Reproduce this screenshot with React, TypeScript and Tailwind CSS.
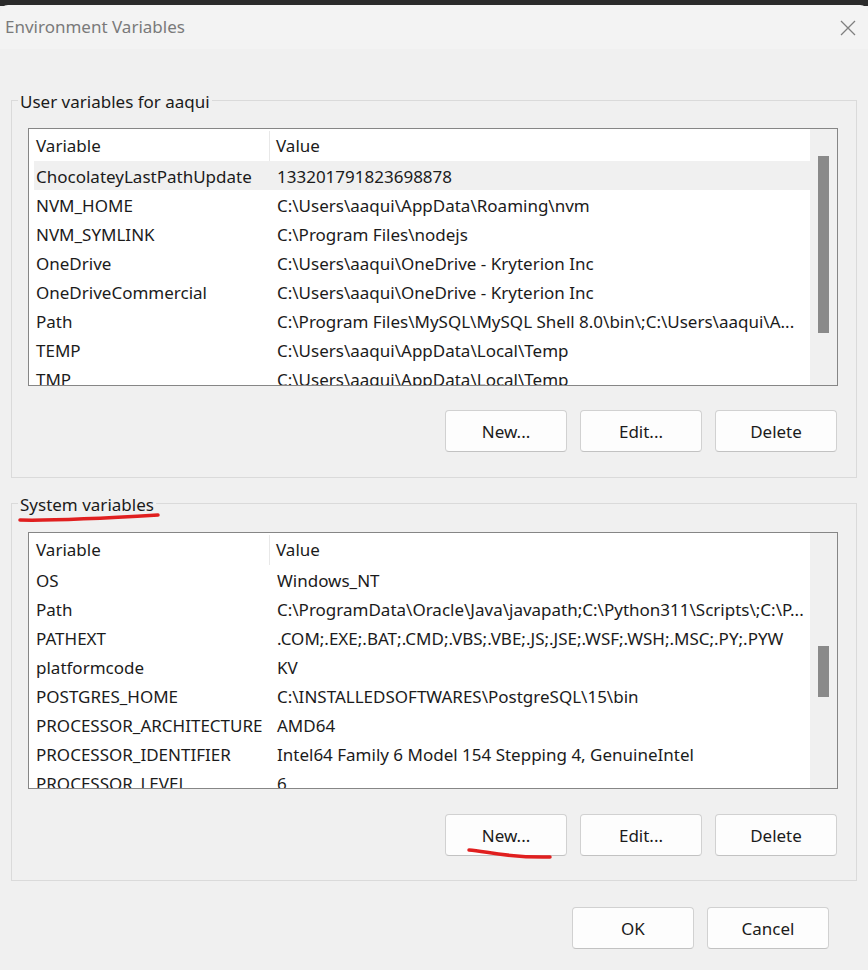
import React from 'react'

const userVars: Array<[string, string]> = [
  ['ChocolateyLastPathUpdate', '133201791823698878'],
  ['NVM_HOME', 'C:\\Users\\aaqui\\AppData\\Roaming\\nvm'],
  ['NVM_SYMLINK', 'C:\\Program Files\\nodejs'],
  ['OneDrive', 'C:\\Users\\aaqui\\OneDrive - Kryterion Inc'],
  ['OneDriveCommercial', 'C:\\Users\\aaqui\\OneDrive - Kryterion Inc'],
  ['Path', 'C:\\Program Files\\MySQL\\MySQL Shell 8.0\\bin\\;C:\\Users\\aaqui\\A...'],
  ['TEMP', 'C:\\Users\\aaqui\\AppData\\Local\\Temp'],
  ['TMP', 'C:\\Users\\aaqui\\AppData\\Local\\Temp'],
]

const systemVars: Array<[string, string]> = [
  ['OS', 'Windows_NT'],
  ['Path', 'C:\\ProgramData\\Oracle\\Java\\javapath;C:\\Python311\\Scripts\\;C:\\P...'],
  ['PATHEXT', '.COM;.EXE;.BAT;.CMD;.VBS;.VBE;.JS;.JSE;.WSF;.WSH;.MSC;.PY;.PYW'],
  ['platformcode', 'KV'],
  ['POSTGRES_HOME', 'C:\\INSTALLEDSOFTWARES\\PostgreSQL\\15\\bin'],
  ['PROCESSOR_ARCHITECTURE', 'AMD64'],
  ['PROCESSOR_IDENTIFIER', 'Intel64 Family 6 Model 154 Stepping 4, GenuineIntel'],
  ['PROCESSOR_LEVEL', '6'],
]

function WinButton({ label, children }: { label: string; children?: React.ReactNode }) {
  return (
    <button className="relative h-[42px] w-[122px] rounded-[4px] border border-[#d1d1d1] border-b-[#c2c2c2] bg-[#fdfdfd] pt-[1px] text-[17px] text-[#1b1b1b]">
      {label}
      {children}
    </button>
  )
}

function VarList({
  rows,
  height,
  selected,
  thumbTop,
  thumbHeight,
}: {
  rows: Array<[string, string]>
  height: string
  selected?: number
  thumbTop: string
  thumbHeight: string
}) {
  return (
    <div className={`ml-[10px] flex w-[810px] overflow-hidden border border-[#868686] bg-white ${height}`}>
      <div className="min-w-0 flex-1 overflow-hidden">
        <div className="flex h-[32px] items-center pt-[2px] text-[17px] text-[#1b1b1b]">
          <div className="flex h-full w-[241px] items-center border-r border-[#e8e8e8] pl-[7px]">Variable</div>
          <div className="pl-[6px]">Value</div>
        </div>
        {rows.map(([name, value], i) => (
          <div
            key={name}
            className={`ml-[5px] flex h-[29px] items-center whitespace-nowrap pt-[2px] text-[17px] text-[#1b1b1b] ${
              i === selected ? 'bg-[#f0f0f0]' : ''
            }`}
          >
            <div className="w-[236px] shrink-0 overflow-hidden pl-[2px]">{name}</div>
            <div className="pl-[7px]">{value}</div>
          </div>
        ))}
      </div>
      <div className="w-[27px] shrink-0 bg-[#f0f0f0] pl-[8px]">
        <div className={`w-[11px] bg-[#8a8a8a] ${thumbTop} ${thumbHeight}`} />
      </div>
    </div>
  )
}

export default function App() {
  return (
    <div
      className="relative h-[970px] w-[868px] overflow-hidden bg-[#f0f0f0]"
      style={{ fontFamily: '"Noto Sans", "Open Sans", sans-serif' }}
    >
      <div className="h-[6px] bg-[#2b2b2b]" />
      <div className="-mt-[1px] flex h-[44px] items-center justify-between rounded-t-[8px] bg-[#f3f3f3] pl-[5px] pr-[12px]">
        <span className="text-[17px] text-[#7a7a7a]">Environment Variables</span>
        <svg width="16" height="16" viewBox="0 0 16 16" className="mt-[1px]">
          <path d="M1 1L15 15M15 1L1 15" stroke="#7f7f7f" strokeWidth="1.3" fill="none" />
        </svg>
      </div>
      <div className="h-[1px]" />

      <fieldset className="ml-[11px] mt-[38px] w-[846px] border border-[#dadada] px-[6px] pb-[25px] pt-[16px]">
        <legend className="h-[24px] px-[2px] text-[17px] leading-[24px] text-[#1b1b1b]">
          <span className="relative top-[2px]">User variables for aaqui</span>
        </legend>
        <VarList rows={userVars} height="h-[258px]" selected={0} thumbTop="mt-[27px]" thumbHeight="h-[177px]" />
        <div className="mr-[13px] mt-[24px] flex justify-end gap-[13px]">
          <WinButton label="New..." />
          <WinButton label="Edit..." />
          <WinButton label="Delete" />
        </div>
      </fieldset>

      <fieldset className="ml-[11px] mt-[13px] w-[846px] border border-[#dadada] px-[6px] pb-[24px] pt-[17px]">
        <legend className="relative h-[24px] px-[2px] text-[17px] leading-[24px] text-[#1b1b1b]">
          <span className="relative top-[2px]">System variables</span>
          <svg className="absolute left-[0px] top-[20px]" width="146" height="14" viewBox="0 0 146 14">
            <path d="M2 9 C 40 10, 90 7, 140 4" stroke="#e01f1f" strokeWidth="3.5" strokeLinecap="round" fill="none" />
          </svg>
        </legend>
        <VarList rows={systemVars} height="h-[257px]" thumbTop="mt-[113px]" thumbHeight="h-[51px]" />
        <div className="mr-[13px] mt-[25px] flex justify-end gap-[13px]">
          <WinButton label="New...">
            <svg className="absolute left-[20px] top-[32px]" width="90" height="14" viewBox="0 0 90 14">
              <path d="M3 3 C 20 4, 40 11, 84 10" stroke="#e01f1f" strokeWidth="3.5" strokeLinecap="round" fill="none" />
            </svg>
          </WinButton>
          <WinButton label="Edit..." />
          <WinButton label="Delete" />
        </div>
      </fieldset>

      <div className="mr-[39px] mt-[26px] flex justify-end gap-[13px]">
        <WinButton label="OK" />
        <WinButton label="Cancel" />
      </div>
    </div>
  )
}
